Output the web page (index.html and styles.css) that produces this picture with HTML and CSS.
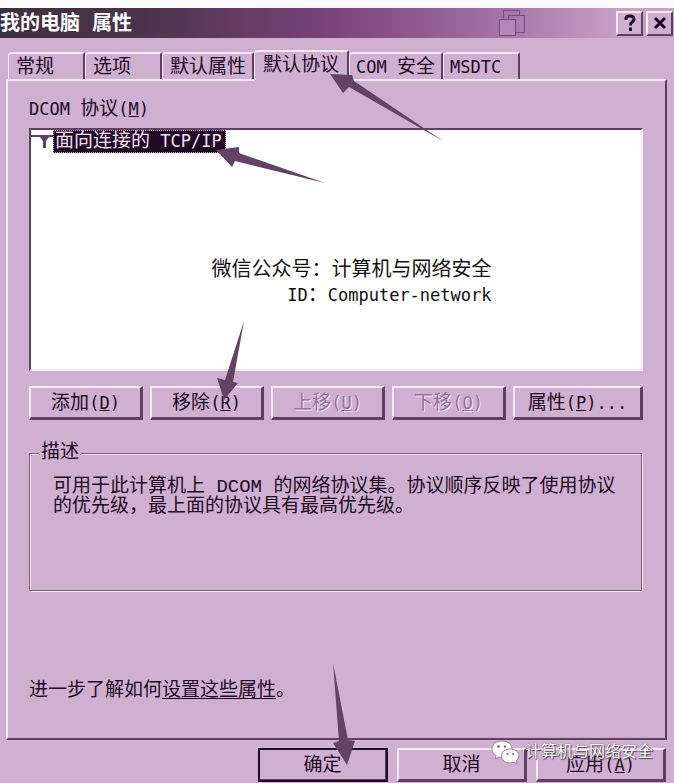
FILE: index.html
```html
<!DOCTYPE html>
<html lang="zh-CN">
<head>
<meta charset="utf-8">
<title>我的电脑 属性</title>
<link rel="stylesheet" href="styles.css">
</head>
<body>
<main class="dialog">
  <header class="titlebar">
    <h1 class="title">我的电脑 属性</h1>
    <svg class="windows-mark" width="28" height="28" viewBox="0 0 28 28" aria-hidden="true">
      <path d="M5.500 10V1.500H21.500V6.500M10.500 10V6.500H26.500V23.500H18"/>
      <path class="front" d="M1.500 10.500H17.500V26.500H1.500Z"/>
    </svg>
    <button class="caption-btn" type="button" aria-label="帮助">
      <svg width="16" height="18" viewBox="0 0 16 18" aria-hidden="true"><path d="M4 6V4.500Q4 2 8 2Q12 2 12 5Q12 7.500 9.500 8.500Q8.500 9 8.500 11.500M8.500 13.500V17" fill="none" stroke="currentColor" stroke-width="3"/></svg>
    </button>
    <button class="caption-btn" type="button" aria-label="关闭">
      <svg width="16" height="18" viewBox="0 0 16 18" aria-hidden="true"><path d="M3 4L13 14M13 4L3 14" fill="none" stroke="currentColor" stroke-width="3"/></svg>
    </button>
  </header>

  <div class="tabs" role="tablist">
    <button class="tab" type="button" role="tab">常规</button>
    <button class="tab" type="button" role="tab">选项</button>
    <button class="tab" type="button" role="tab">默认属性</button>
    <button class="tab active" type="button" role="tab" aria-selected="true">默认协议
      <svg class="arrow arrow-tab" width="120" height="72" viewBox="328 72 120 72" aria-hidden="true"><path d="M331 74L353 75L355 81L444 141L350 87L344 93Z"/></svg>
    </button>
    <button class="tab" type="button" role="tab"><span class="latin">COM </span>安全</button>
    <button class="tab" type="button" role="tab"><span class="latin">MSDTC</span></button>
  </div>

  <section class="panel">
    <p class="label" id="protocols"><span class="latin">DCOM </span>协议<span class="latin">(<u>M</u>)</span></p>
    <div class="list">
      <ul class="items" role="listbox" aria-labelledby="protocols">
        <li class="item" role="option" aria-selected="true">
          <svg class="net-icon" width="22" height="22" viewBox="0 0 22 22" aria-hidden="true"><path d="M0 5H22V7H18L15 11V18H12V11L9 7H0Z"/></svg>
          <span class="item-text">面向连接的<span class="latin"> TCP/IP</span></span>
          <svg class="arrow arrow-item" width="112" height="40" viewBox="215 146 112 40" aria-hidden="true"><path d="M216 150L239 147V153L325 183L235 161L232 167Z"/></svg>
        </li>
      </ul>
      <p class="credit">微信公众号：计算机与网络安全<br><span class="latin">ID</span>：<span class="latin">Computer-network</span></p>
    </div>
    <div class="actions">
      <button class="btn" type="button">添加<span class="latin">(<u>D</u>)</span></button>
      <button class="btn" type="button">移除<span class="latin">(<u>R</u>)</span>
        <svg class="arrow arrow-remove" width="30" height="80" viewBox="216 321 30 80" aria-hidden="true"><path d="M244 321L233 382L238 383L224 400L217 378L225 380Z"/></svg>
      </button>
      <button class="btn" type="button" disabled>上移<span class="latin">(<u>U</u>)</span></button>
      <button class="btn" type="button" disabled>下移<span class="latin">(<u>O</u>)</span></button>
      <button class="btn" type="button">属性<span class="latin">(<u>P</u>)...</span></button>
    </div>
    <fieldset class="group">
      <legend>描述</legend>
      <p class="desc">可用于此计算机上 DCOM 的网络协议集。协议顺序反映了使用协议的优先级，最上面的协议具有最高优先级。</p>
    </fieldset>
    <p class="more">进一步了解如何<a href="#protocols">设置这些属性</a>。</p>
  </section>

  <footer class="footer">
    <button class="btn default" type="button">确定
      <svg class="arrow arrow-ok" width="26" height="104" viewBox="331 663 26 104" aria-hidden="true"><path d="M333 664L348 741L355 742L347 766L333 744L339 742Z"/></svg>
    </button>
    <button class="btn" type="button">取消</button>
    <button class="btn" type="button">应用<span class="latin">(<u>A</u>)</span></button>
    <div class="watermark">
      <svg width="30" height="26" viewBox="0 0 30 26" aria-hidden="true">
        <path class="bubble" d="M11 1C5 1 1 4.500 1 9C1 12 2.500 14 5 15.500L4 19L8 17Q10 17.500 12 17C18 17 21 13.500 21 9C21 4.500 17 1 11 1Z"/>
        <path class="bubble" d="M19 9C14 9 10.500 12 10.500 16C10.500 20 14 23 19 23Q21 23 23 22L26 24L25.500 20.500Q28 18.500 28 16C28 12 24 9 19 9Z"/>
        <g class="eyes"><circle cx="7.500" cy="6.500" r="1.300"/><circle cx="14" cy="6.500" r="1.300"/><circle cx="16.500" cy="14" r="1.100"/><circle cx="22" cy="14" r="1.100"/></g>
      </svg>
      <span>计算机与网络安全</span>
    </div>
  </footer>
</main>
</body>
</html>
```
FILE: styles.css
```css
:root {
  --face: #d0b0d0;
  --light: #fbe8fb;
  --dark: #604060;
  --ink: #200a24;
  --arrow: #644264;
}

* { box-sizing: border-box; }

body {
  margin: 0;
  background: var(--face);
  color: var(--ink);
  font: 19px/20px "Liberation Mono", "Noto Sans CJK SC", monospace;
}

button {
  color: inherit;
  font: inherit;
  background: var(--face);
  border-radius: 0;
  white-space: nowrap;
}

p, h1, ul { margin: 0; padding: 0; }

.latin {
  font-family: "DejaVu Sans Mono", monospace;
  font-size: 17px;
  line-height: 1;
  white-space: pre;
}

.dialog { border-top: 8px solid #fdfafd; }

.titlebar {
  display: flex;
  align-items: center;
  height: 30px;
  padding-right: 1px;
  background: linear-gradient(90deg, #3c303c 0%, #4c344c 22%, #7b447b 50%, #9c6a9c 70%, #c8a0c8 92%);
}

.title {
  flex: 1;
  padding-top: 4px;
  color: #fff;
  font-size: 20px;
  line-height: 24px;
  font-weight: 700;
}

.windows-mark {
  margin-right: 87px;
  fill: none;
  stroke: #764a7a;
}

.windows-mark .front { fill: #b488b6; }

.caption-btn {
  display: flex;
  align-items: center;
  justify-content: center;
  width: 27px;
  height: 25px;
  margin-left: 3px;
  padding: 0;
  border: 2px solid;
  border-color: var(--light) var(--dark) var(--dark) var(--light);
}

.tabs {
  display: flex;
  align-items: flex-end;
  height: 41px;
  padding-left: 8px;
}

.tab {
  position: relative;
  min-width: 77px;
  height: 27px;
  padding: 3px 6px 0 7px;
  border: solid;
  border-width: 2px 2px 0 1px;
  border-color: var(--light) var(--dark) var(--light) var(--light);
  border-radius: 4px 2px 0 0;
  text-align: left;
}

.tab:nth-child(n+5) { padding-left: 6px; }

.tab.active {
  z-index: 1;
  height: 31px;
  margin-bottom: -2px;
  padding: 0 8px 2px 8px;
}

.panel {
  margin: 0 7px 0 6px;
  padding: 19px 22px 37px 21px;
  border: 2px solid;
  border-color: var(--light) var(--dark) var(--dark) var(--light);
}

.list {
  min-height: 243px;
  margin-top: 8px;
  background: #fff;
  border: 2px solid;
  border-color: var(--dark) var(--light) var(--light) var(--dark);
}

.items { list-style: none; }

.item {
  position: relative;
  display: flex;
  width: max-content;
}

.net-icon { fill: var(--dark); }

.item-text {
  padding: 1px 4px 0 2px;
  color: #f4e0f4;
  background: var(--ink);
  outline: 1px dotted #c8a0c8;
  outline-offset: -1px;
  line-height: 22px;
}

.credit {
  width: max-content;
  margin: 105px auto 0;
  padding-left: 31px;
  color: #101010;
  font-size: 20px;
  line-height: 25px;
  text-align: right;
}

.actions {
  display: grid;
  grid-template-columns: repeat(4, 114fr) 130fr;
  gap: 7px;
  margin-top: 15px;
}

.btn {
  position: relative;
  height: 34px;
  padding: 3px 0 0;
  border: solid;
  border-width: 2px 3px 3px 2px;
  border-color: var(--light) var(--dark) var(--dark) var(--light);
}

.btn:disabled {
  color: #94709a;
  text-shadow: 1px 1px 0 var(--light);
}

.group {
  min-width: 0;
  min-height: 148px;
  margin: 23px 1px 0 0;
  padding: 14px 22px 0 23px;
  border: 1px solid #80607f;
  box-shadow: 1px 1px 0 var(--light), inset 1px 1px 0 var(--light);
}

.group legend {
  margin-left: -14px;
  padding: 0 2px;
  background: var(--face);
}

.desc { word-break: break-all; }

.more { margin-top: 90px; }

.more a { color: inherit; text-underline-offset: 2px; }

.footer {
  position: relative;
  display: grid;
  grid-template-columns: repeat(3, 130px);
  justify-content: end;
  gap: 9px;
  margin-top: 8px;
  padding-right: 8px;
}

.btn.default {
  outline: 2px solid var(--ink);
  outline-offset: -2px;
}

.arrow {
  position: absolute;
  z-index: 2;
  fill: var(--arrow);
  pointer-events: none;
}

.arrow-tab { left: 72px; top: 20px; }
.arrow-item { left: 184px; top: 16px; }
.arrow-remove { left: 64px; top: -67px; }
.arrow-ok { left: 71px; top: -88px; }

.watermark {
  position: absolute;
  right: 21px;
  top: -8px;
  display: flex;
  align-items: center;
  gap: 4px;
  color: #fff;
  font-size: 16px;
  text-shadow: 1px 1px 1px #504050, 0 0 1px #504050;
}

.bubble { fill: #fff; stroke: #a080a0; stroke-width: 1; }
.eyes { fill: #886088; }
```
